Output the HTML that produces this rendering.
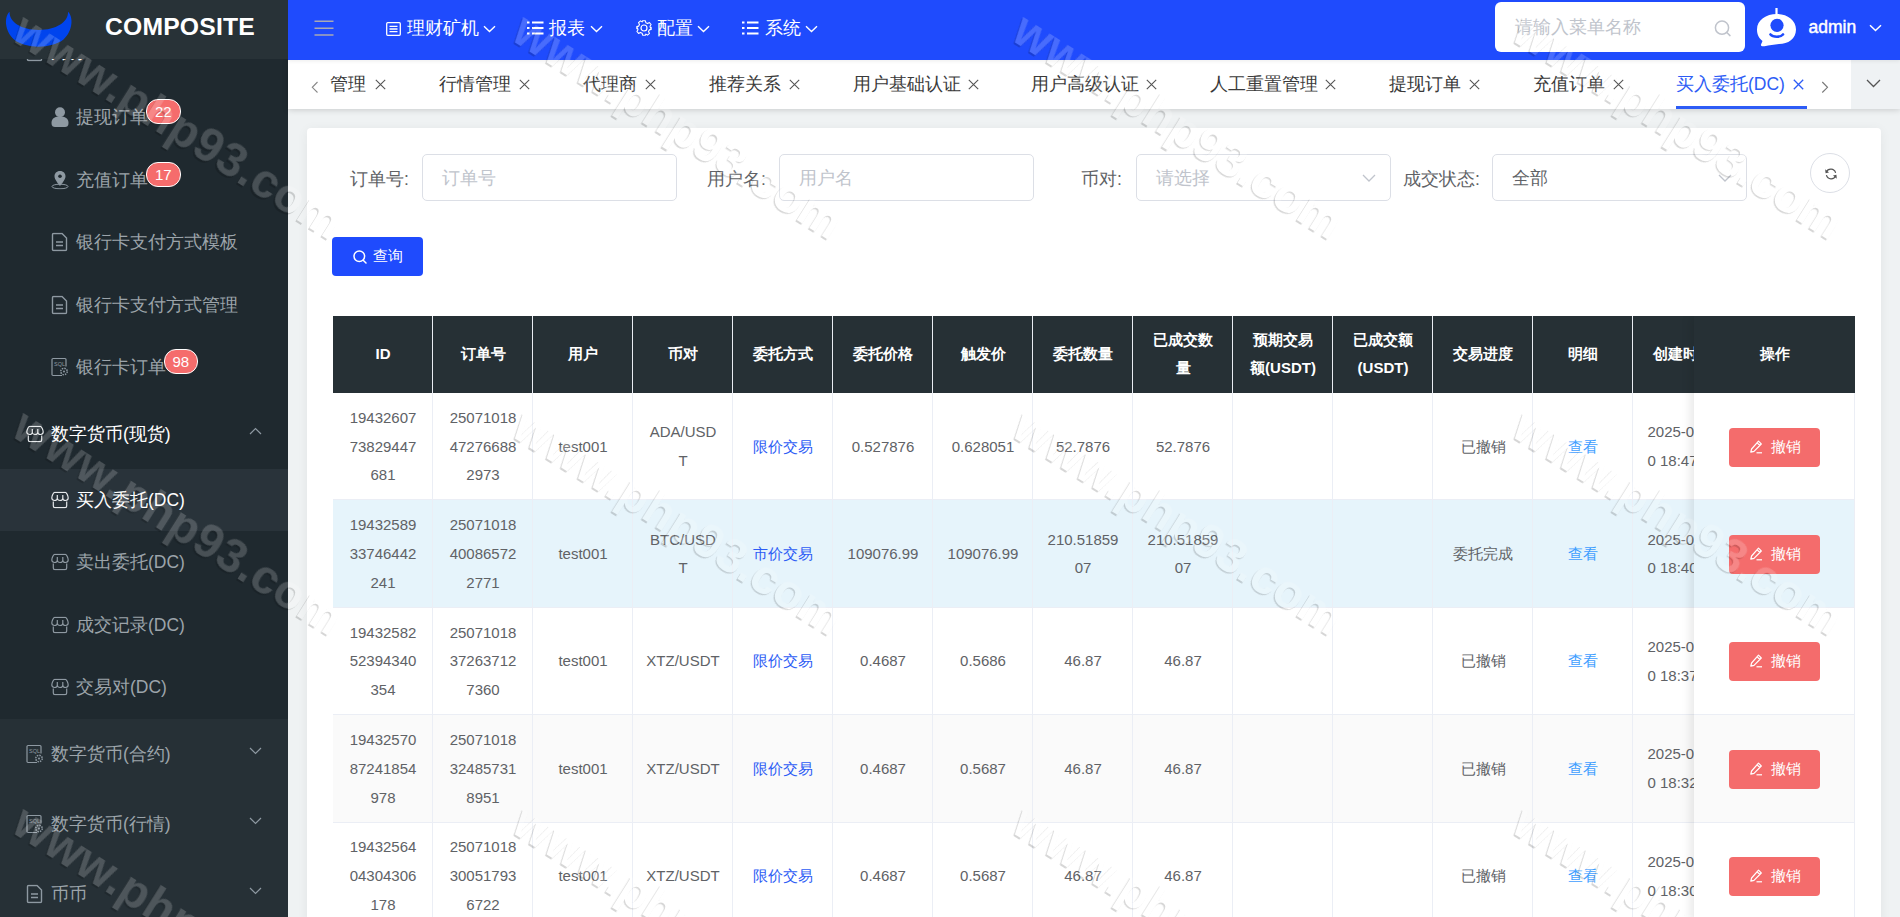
<!DOCTYPE html>
<html><head><meta charset="utf-8">
<style>
*{box-sizing:border-box;margin:0;padding:0}
html,body{width:1900px;height:917px;overflow:hidden;background:#eff2f3;font-family:"Liberation Sans",sans-serif;}
.abs{position:absolute}
#side{position:absolute;left:0;top:0;width:288px;height:917px;background:#1f292f;overflow:hidden}
#logo{position:absolute;left:0;top:0;width:288px;height:59px;background:#283237;z-index:3}
#logo .t{position:absolute;left:105px;top:13px;font-size:24.7px;font-weight:bold;color:#fff;letter-spacing:0.2px}
.mi{position:absolute;left:0;width:288px;color:#9ca4aa;font-size:17.5px;white-space:nowrap}
.mi .ic{position:absolute;top:50%;transform:translateY(-50%)}
.mi .tx{position:absolute;top:50%;transform:translateY(-50%)}
.badge{position:absolute;background:#f56c6c;color:#fff;font-size:15px;border:1px solid #fff;border-radius:12px;height:25px;line-height:23px;padding:0 8px;text-align:center}
#hdr{position:absolute;left:288px;top:0;width:1612px;height:60px;background:#1f4bfd;z-index:2;box-shadow:0 1px 4px rgba(0,0,0,.08)}
.hm{position:absolute;top:0;height:60px;line-height:56px;font-size:17.5px;color:#fff;font-weight:500;width:140px}
#tabs{position:absolute;left:288px;top:60px;width:1612px;height:49px;background:#fff;box-shadow:0 1px 6px rgba(0,0,0,.16)}
.tab{position:absolute;top:0;height:49px;line-height:49px;font-size:17.5px;color:#3a3a3a;white-space:nowrap}
#card{position:absolute;left:307px;top:128px;width:1574px;height:800px;background:#fff;border-radius:4px;box-shadow:0 2px 12px rgba(0,0,0,.06)}

.lbl{position:absolute;font-size:17.5px;color:#606266;line-height:20px;white-space:nowrap}
.inp{position:absolute;top:26px;width:254.5px;height:46.5px;border:1px solid #dcdfe6;border-radius:5px;background:#fff}
.inp .ph{position:absolute;left:19px;top:13px;font-size:17.5px;color:#c0c4cc;line-height:20px;white-space:nowrap}
.inp svg{position:absolute;right:14px;top:19px}
#tbl{position:absolute;left:25.5px;top:187.75px;width:1522.5px;height:700px;overflow:hidden}
.hrow{position:absolute;left:0;top:0;height:77.25px;width:1522.5px;background:#263035}
.hc{position:absolute;top:0;height:77.25px;width:100px;border-right:1px solid #e9ecf2;display:flex;align-items:center;justify-content:center;padding:0 0 0 2px;text-align:center;color:#fff;font-weight:bold;font-size:15px;line-height:28px}
.row{position:absolute;left:0;width:1522.5px;height:107.4px;border-bottom:1px solid #ebeef5}
.c{position:absolute;top:0;height:106.4px;width:100px;border-right:1px solid #ebeef5;display:flex;align-items:center;justify-content:center;text-align:center;color:#606266;font-size:15px;line-height:28.75px;word-break:break-all;padding:1.5px 11px 0 13px}
.c a{color:#2d5cf5;text-decoration:none}
.c .v{color:#409eff}
.fix{position:absolute;left:1361.5px;top:0;width:161px;height:700px;box-shadow:-3px 0 10px rgba(0,0,0,.10)}
.btn-del{position:absolute;left:35px;width:91px;height:39px;background:#f46c6c;border-radius:4px;color:#fff;font-size:15px;font-weight:500;line-height:38px}

</style></head>
<body>
<svg width="0" height="0" style="position:absolute"><defs>
<g id="shop"><path d="M3.5 0.8 H14.5 C15.6 0.8 17.2 5 17.2 6.6 C17.2 8 16 9 14.5 9 C13 9 11.8 8 11.8 6.8 C11.8 8 10.5 9 9 9 C7.5 9 6.3 8 6.3 6.8 C6.3 8 5 9 3.5 9 C2 9 0.8 8 0.8 6.6 C0.8 5 2.4 0.8 3.5 0.8 Z M6.3 3.6 V6.8 M11.8 3.6 V6.8 M2.3 10 V14.5 C2.3 15.5 3 16.2 4 16.2 H14 C15 16.2 15.7 15.5 15.7 14.5 V10" fill="none" stroke="#8e99a2" stroke-width="1.2"/></g>
<g id="sql"><path d="M11 18 L2 18 C1.5 18 1 17.5 1 17 L1 2 C1 1.5 1.5 1 2 1 L14 1 C14.5 1 15 1.5 15 2 L15 9" fill="none" stroke="#8e99a2" stroke-width="1.2"/><text x="3" y="8" font-size="5.5" fill="#8e99a2" font-family="Liberation Sans">SQL</text><circle cx="13" cy="14" r="3.2" fill="none" stroke="#8e99a2" stroke-width="1.5" stroke-dasharray="1.5 1"/><circle cx="13" cy="14" r="1" fill="#8e99a2"/></g>
<g id="doc"><path d="M2.5 1 L11 1 L15.5 5.5 L15.5 17 C15.5 17.6 15 18 14.5 18 L2.5 18 C2 18 1.5 17.6 1.5 17 L1.5 2 C1.5 1.4 2 1 2.5 1Z" fill="none" stroke="#8e99a2" stroke-width="1.4"/><path d="M5 9.5 H12 M5 13 H12" stroke="#8e99a2" stroke-width="1.4"/></g>
</defs></svg>
<div id="side">
  <div id="logo">
    <svg class="abs" style="left:0;top:0" width="80" height="59" viewBox="0 0 80 59">
      <path d="M9.6 11.8 C4 17 4.5 31 14 39.5 C25 49 52 49 63.5 39.5 C73 31 73.5 17 68 11.8 C68.5 22 56 30 38.8 30 C21.5 30 9 22 9.6 11.8 Z" fill="#0044ee"/>
    </svg>
    <div class="t">COMPOSITE</div>
  </div>
  <div id="menu">
    <div class="mi" style="top:17px;height:70px;color:#fff"><svg class="ic" style="left:26px" width="17" height="19" viewBox="0 0 17 19"><use href="#doc"/></svg><span class="tx" style="left:51px">财务</span></div>
    <div class="mi" style="top:86px;height:62.5px">
      <svg class="ic" style="left:51px" width="18" height="20" viewBox="0 0 18 20"><circle cx="9" cy="5.3" r="5" fill="#8e99a2"/><path d="M0.5 16 C0.5 11 4 9.5 9 9.5 C14 9.5 17.5 11 17.5 16 C17.5 19 16 20 14 20 L4 20 C2 20 0.5 19 0.5 16Z" fill="#8e99a2"/></svg>
      <span class="tx" style="left:76px">提现订单</span>
      <span class="badge" style="left:146px;top:13px">22</span>
    </div>
    <div class="mi" style="top:148.5px;height:62.5px">
      <svg class="ic" style="left:51px" width="18" height="19" viewBox="0 0 18 19"><path d="M9 0.5 C5.5 0.5 3.5 3 3.5 5.8 C3.5 9 7 13 9 15.5 C11 13 14.5 9 14.5 5.8 C14.5 3 12.5 0.5 9 0.5Z" fill="#8e99a2"/><circle cx="9" cy="5.8" r="1.8" fill="#1f292f"/><ellipse cx="9" cy="16" rx="8" ry="2.3" fill="none" stroke="#8e99a2" stroke-width="1"/></svg>
      <span class="tx" style="left:76px">充值订单</span>
      <span class="badge" style="left:146px;top:13.5px">17</span>
    </div>
    <div class="mi" style="top:211px;height:62.5px">
      <svg class="ic" style="left:51px" width="17" height="19" viewBox="0 0 17 19"><path d="M2.5 1 L11 1 L15.5 5.5 L15.5 17 C15.5 17.6 15 18 14.5 18 L2.5 18 C2 18 1.5 17.6 1.5 17 L1.5 2 C1.5 1.4 2 1 2.5 1Z" fill="none" stroke="#8e99a2" stroke-width="1.4"/><path d="M5 9.5 H12 M5 13 H12" stroke="#8e99a2" stroke-width="1.4"/></svg>
      <span class="tx" style="left:76px">银行卡支付方式模板</span>
    </div>
    <div class="mi" style="top:273.5px;height:62.5px">
      <svg class="ic" style="left:51px" width="17" height="19" viewBox="0 0 17 19"><path d="M2.5 1 L11 1 L15.5 5.5 L15.5 17 C15.5 17.6 15 18 14.5 18 L2.5 18 C2 18 1.5 17.6 1.5 17 L1.5 2 C1.5 1.4 2 1 2.5 1Z" fill="none" stroke="#8e99a2" stroke-width="1.4"/><path d="M5 9.5 H12 M5 13 H12" stroke="#8e99a2" stroke-width="1.4"/></svg>
      <span class="tx" style="left:76px">银行卡支付方式管理</span>
    </div>
    <div class="mi" style="top:336px;height:62.5px">
      <svg class="ic" style="left:51px" width="18" height="19" viewBox="0 0 18 19"><path d="M11 18 L2 18 C1.5 18 1 17.5 1 17 L1 2 C1 1.5 1.5 1 2 1 L14 1 C14.5 1 15 1.5 15 2 L15 9" fill="none" stroke="#8e99a2" stroke-width="1.2"/><text x="3" y="8" font-size="5.5" fill="#8e99a2" font-family="Liberation Sans">SQL</text><circle cx="13" cy="14" r="3.2" fill="none" stroke="#8e99a2" stroke-width="1.5" stroke-dasharray="1.5 1"/><circle cx="13" cy="14" r="1" fill="#8e99a2"/></svg>
      <span class="tx" style="left:76px">银行卡订单</span>
      <span class="badge" style="left:163.5px;top:12.8px">98</span>
    </div>
    <div class="mi open" style="top:398.5px;height:70px;color:#fff">
      <svg class="ic" style="left:26px" width="18" height="17" viewBox="0 0 18 17"><path d="M3.5 0.8 H14.5 C15.6 0.8 17.2 5 17.2 6.6 C17.2 8 16 9 14.5 9 C13 9 11.8 8 11.8 6.8 C11.8 8 10.5 9 9 9 C7.5 9 6.3 8 6.3 6.8 C6.3 8 5 9 3.5 9 C2 9 0.8 8 0.8 6.6 C0.8 5 2.4 0.8 3.5 0.8 Z M6.3 3.6 V6.8 M11.8 3.6 V6.8 M2.3 10 V14.5 C2.3 15.5 3 16.2 4 16.2 H14 C15 16.2 15.7 15.5 15.7 14.5 V10" fill="none" stroke="#e6e9eb" stroke-width="1.2"/></svg>
      <span class="tx" style="left:51px">数字货币(现货)</span>
      <svg class="ic" style="left:249px;margin-top:-2.5px" width="13" height="8" viewBox="0 0 13 8"><path d="M1 7 L6.5 1.5 L12 7" fill="none" stroke="#8e99a2" stroke-width="1.2"/></svg>
    </div>
    <div class="mi act" style="top:468.5px;height:62.5px;background:#29333a;color:#fff">
      <svg class="ic" style="left:51px" width="18" height="17" viewBox="0 0 18 17"><path d="M3.5 0.8 H14.5 C15.6 0.8 17.2 5 17.2 6.6 C17.2 8 16 9 14.5 9 C13 9 11.8 8 11.8 6.8 C11.8 8 10.5 9 9 9 C7.5 9 6.3 8 6.3 6.8 C6.3 8 5 9 3.5 9 C2 9 0.8 8 0.8 6.6 C0.8 5 2.4 0.8 3.5 0.8 Z M6.3 3.6 V6.8 M11.8 3.6 V6.8 M2.3 10 V14.5 C2.3 15.5 3 16.2 4 16.2 H14 C15 16.2 15.7 15.5 15.7 14.5 V10" fill="none" stroke="#e6e9eb" stroke-width="1.2"/></svg>
      <span class="tx" style="left:76px">买入委托(DC)</span>
    </div>
    <div class="mi" style="top:531px;height:62.5px">
      <svg class="ic" style="left:51px" width="18" height="17" viewBox="0 0 18 17"><use href="#shop"/></svg>
      <span class="tx" style="left:76px">卖出委托(DC)</span>
    </div>
    <div class="mi" style="top:593.5px;height:62.5px">
      <svg class="ic" style="left:51px" width="18" height="17" viewBox="0 0 18 17"><use href="#shop"/></svg>
      <span class="tx" style="left:76px">成交记录(DC)</span>
    </div>
    <div class="mi" style="top:656px;height:62.5px">
      <svg class="ic" style="left:51px" width="18" height="17" viewBox="0 0 18 17"><use href="#shop"/></svg>
      <span class="tx" style="left:76px">交易对(DC)</span>
    </div>
    <div class="mi top" style="top:718.5px;height:70px;background:#263036">
      <svg class="ic" style="left:26px" width="18" height="19" viewBox="0 0 18 19"><use href="#sql"/></svg>
      <span class="tx" style="left:51px">数字货币(合约)</span>
      <svg class="ic" style="left:249px;margin-top:-2.5px" width="13" height="8" viewBox="0 0 13 8"><path d="M1 1 L6.5 6.5 L12 1" fill="none" stroke="#8e99a2" stroke-width="1.2"/></svg>
    </div>
    <div class="mi top" style="top:788.5px;height:70px;background:#263036">
      <svg class="ic" style="left:26px" width="18" height="19" viewBox="0 0 18 19"><use href="#sql"/></svg>
      <span class="tx" style="left:51px">数字货币(行情)</span>
      <svg class="ic" style="left:249px;margin-top:-2.5px" width="13" height="8" viewBox="0 0 13 8"><path d="M1 1 L6.5 6.5 L12 1" fill="none" stroke="#8e99a2" stroke-width="1.2"/></svg>
    </div>
    <div class="mi top" style="top:858.5px;height:70px;background:#263036">
      <svg class="ic" style="left:26px" width="17" height="19" viewBox="0 0 17 19"><use href="#doc"/></svg>
      <span class="tx" style="left:51px">币币</span>
      <svg class="ic" style="left:249px;margin-top:-2.5px" width="13" height="8" viewBox="0 0 13 8"><path d="M1 1 L6.5 6.5 L12 1" fill="none" stroke="#8e99a2" stroke-width="1.2"/></svg>
    </div>
  </div>
</div>
<div id="hdr">
  <svg class="abs" style="left:26px;top:20px" width="20" height="16" viewBox="0 0 20 16"><path d="M0.5 1.3 H19.5 M0.5 8.2 H19.5 M0.5 15 H19.5" stroke="#a9a9b3" stroke-width="1.6"/></svg>
  <div class="hm" style="left:98px">
    <svg width="15" height="14" viewBox="0 0 15 14" style="position:absolute;left:0;top:22px"><rect x="0.7" y="0.7" width="13.6" height="12.6" rx="1" fill="none" stroke="#fff" stroke-width="1.3"/><path d="M3.5 4.3 H11.5 M3.5 7 H11.5 M3.5 9.7 H11.5" stroke="#fff" stroke-width="1.3"/></svg>
    <span style="position:absolute;left:21px;top:0">理财矿机</span>
    <svg width="13" height="8" viewBox="0 0 13 8" style="position:absolute;left:97px;top:25px"><path d="M1 1.2 L6.5 6.5 L12 1.2" fill="none" stroke="#fff" stroke-width="1.4"/></svg>
  </div>
  <div class="hm" style="left:239px">
    <svg width="17" height="14" viewBox="0 0 17 14" style="position:absolute;left:0;top:21px"><path d="M0 1.5 H2.5 M0 7 H2.5 M0 12.5 H2.5 M5 1.5 H16.5 M5 7 H16.5 M5 12.5 H16.5" stroke="#fff" stroke-width="2"/></svg>
    <span style="position:absolute;left:22px;top:0">报表</span>
    <svg width="13" height="8" viewBox="0 0 13 8" style="position:absolute;left:63px;top:25px"><path d="M1 1.2 L6.5 6.5 L12 1.2" fill="none" stroke="#fff" stroke-width="1.4"/></svg>
  </div>
  <div class="hm" style="left:348px">
    <svg width="16" height="16" viewBox="0 0 16 16" style="position:absolute;left:0;top:20px"><path d="M6.6 0.8 H9.4 L9.9 2.8 L11.6 3.6 L13.4 2.6 L15.1 4.5 L14 6.2 L14.5 8 L15.2 8.6 V7.4 L15.2 9.4 L13.3 9.9 L12.5 11.6 L13.5 13.4 L11.5 15.1 L9.9 14.1 L9.4 15.2 H6.6 L6.1 13.2 L4.4 12.4 L2.6 13.4 L0.9 11.5 L2 9.8 L1.5 8 L0.8 7.4 V8.6 L0.8 6.6 L2.7 6.1 L3.5 4.4 L2.5 2.6 L4.5 0.9 L6.1 1.9Z" fill="none" stroke="#fff" stroke-width="1.1" stroke-linejoin="round"/><circle cx="8" cy="8" r="3" fill="none" stroke="#fff" stroke-width="1.2"/></svg>
    <span style="position:absolute;left:21px;top:0">配置</span>
    <svg width="13" height="8" viewBox="0 0 13 8" style="position:absolute;left:61px;top:25px"><path d="M1 1.2 L6.5 6.5 L12 1.2" fill="none" stroke="#fff" stroke-width="1.4"/></svg>
  </div>
  <div class="hm" style="left:454px">
    <svg width="17" height="14" viewBox="0 0 17 14" style="position:absolute;left:0;top:21px"><path d="M0 1.5 H2.5 M0 7 H2.5 M0 12.5 H2.5 M5 1.5 H16.5 M5 7 H16.5 M5 12.5 H16.5" stroke="#fff" stroke-width="2"/></svg>
    <span style="position:absolute;left:23px;top:0">系统</span>
    <svg width="13" height="8" viewBox="0 0 13 8" style="position:absolute;left:63px;top:25px"><path d="M1 1.2 L6.5 6.5 L12 1.2" fill="none" stroke="#fff" stroke-width="1.4"/></svg>
  </div>
  <div class="abs" style="left:1207px;top:2px;width:250px;height:50px;background:#fff;border-radius:6px">
    <span class="abs" style="left:20px;top:13px;font-size:17.5px;color:#c0c4cc">请输入菜单名称</span>
    <svg class="abs" style="left:219px;top:18px" width="18" height="17" viewBox="0 0 18 17"><circle cx="8" cy="7.7" r="6.6" fill="none" stroke="#c0c4cc" stroke-width="1.5"/><path d="M12.8 12.5 L16 15.6" stroke="#c0c4cc" stroke-width="1.5" stroke-linecap="round"/></svg>
  </div>
  <svg class="abs" style="left:1469px;top:8px" width="40" height="40" viewBox="0 0 40 40"><path d="M19.5 0 V7" stroke="#fff" stroke-width="2.2"/><path d="M20 6 C30 6 39 12 39 21.5 C39 31 31 36 22 36 L11 37.5 C9 38 3 39.5 4 36.5 L5.5 33 C1.5 30 0 26 0 21.5 C0 12 9 6 20 6Z" fill="#fff"/><circle cx="20" cy="17.3" r="6.6" fill="#1f4bfd"/><path d="M13.5 26.5 C16 29.5 23.5 29.5 26 26.5" fill="none" stroke="#1f4bfd" stroke-width="2.6" stroke-linecap="round"/></svg>
  <span class="abs" style="left:1520.5px;top:17px;font-size:17.5px;color:#fff;-webkit-text-stroke:0.45px #fff">admin</span>
  <svg class="abs" style="left:1581px;top:24px" width="13" height="8" viewBox="0 0 13 8"><path d="M1 1.2 L6.5 6.5 L12 1.2" fill="none" stroke="#fff" stroke-width="1.5"/></svg>
</div>
<div id="tabs">
  <svg class="abs" style="left:22.5px;top:21px" width="8" height="12" viewBox="0 0 8 12"><path d="M6.5 1 L1.3 6.3 L6.5 11.5" fill="none" stroke="#888" stroke-width="1.1"/></svg>
  <div class="tab" style="left:42px"><span>管理</span><svg width="11" height="11" viewBox="0 0 11 11" style="position:absolute;top:19px;left:44.5px"><path d="M0.8 0.8 L10.2 10.2 M10.2 0.8 L0.8 10.2" stroke="#555" stroke-width="1.1"/></svg></div>
  <div class="tab" style="left:151px"><span>行情管理</span><svg width="11" height="11" viewBox="0 0 11 11" style="position:absolute;top:19px;left:79.5px"><path d="M0.8 0.8 L10.2 10.2 M10.2 0.8 L0.8 10.2" stroke="#555" stroke-width="1.1"/></svg></div>
  <div class="tab" style="left:295px"><span>代理商</span><svg width="11" height="11" viewBox="0 0 11 11" style="position:absolute;top:19px;left:62.0px"><path d="M0.8 0.8 L10.2 10.2 M10.2 0.8 L0.8 10.2" stroke="#555" stroke-width="1.1"/></svg></div>
  <div class="tab" style="left:421px"><span>推荐关系</span><svg width="11" height="11" viewBox="0 0 11 11" style="position:absolute;top:19px;left:79.5px"><path d="M0.8 0.8 L10.2 10.2 M10.2 0.8 L0.8 10.2" stroke="#555" stroke-width="1.1"/></svg></div>
  <div class="tab" style="left:565px"><span>用户基础认证</span><svg width="11" height="11" viewBox="0 0 11 11" style="position:absolute;top:19px;left:114.5px"><path d="M0.8 0.8 L10.2 10.2 M10.2 0.8 L0.8 10.2" stroke="#555" stroke-width="1.1"/></svg></div>
  <div class="tab" style="left:743px"><span>用户高级认证</span><svg width="11" height="11" viewBox="0 0 11 11" style="position:absolute;top:19px;left:114.5px"><path d="M0.8 0.8 L10.2 10.2 M10.2 0.8 L0.8 10.2" stroke="#555" stroke-width="1.1"/></svg></div>
  <div class="tab" style="left:922px"><span>人工重置管理</span><svg width="11" height="11" viewBox="0 0 11 11" style="position:absolute;top:19px;left:114.5px"><path d="M0.8 0.8 L10.2 10.2 M10.2 0.8 L0.8 10.2" stroke="#555" stroke-width="1.1"/></svg></div>
  <div class="tab" style="left:1101px"><span>提现订单</span><svg width="11" height="11" viewBox="0 0 11 11" style="position:absolute;top:19px;left:79.5px"><path d="M0.8 0.8 L10.2 10.2 M10.2 0.8 L0.8 10.2" stroke="#555" stroke-width="1.1"/></svg></div>
  <div class="tab" style="left:1245px"><span>充值订单</span><svg width="11" height="11" viewBox="0 0 11 11" style="position:absolute;top:19px;left:79.5px"><path d="M0.8 0.8 L10.2 10.2 M10.2 0.8 L0.8 10.2" stroke="#555" stroke-width="1.1"/></svg></div>
  <div class="tab" style="left:1388px;color:#2d5cf6"><span>买入委托(DC)</span><svg width="11" height="11" viewBox="0 0 11 11" style="position:absolute;top:19px;left:117px"><path d="M0.8 0.8 L10.2 10.2 M10.2 0.8 L0.8 10.2" stroke="#2d5cf6" stroke-width="1.3"/></svg></div>
  <div class="abs" style="left:1388px;top:46px;width:131px;height:3px;background:#2d5cf6"></div>
  <svg class="abs" style="left:1532.5px;top:21px" width="8" height="12" viewBox="0 0 8 12"><path d="M1.3 1 L6.5 6.3 L1.3 11.5" fill="none" stroke="#777" stroke-width="1.1"/></svg>
  <div class="abs" style="left:1563px;top:0;width:49px;height:49px;background:#eff2f4"><svg class="abs" style="left:15px;top:19px" width="15" height="9" viewBox="0 0 15 9"><path d="M1 1 L7.5 7.5 L14 1" fill="none" stroke="#555" stroke-width="1.3"/></svg></div>
</div>
<div id="card">
  <div class="lbl" style="left:43px;top:40.5px">订单号:</div>
  <div class="inp" style="left:115px"><span class="ph">订单号</span></div>
  <div class="lbl" style="left:400px;top:40.5px">用户名:</div>
  <div class="inp" style="left:472px"><span class="ph">用户名</span></div>
  <div class="lbl" style="left:774px;top:40.5px">币对:</div>
  <div class="inp" style="left:829px"><span class="ph">请选择</span><svg width="14" height="8" viewBox="0 0 14 8"><path d="M1 1 L7 7 L13 1" fill="none" stroke="#c0c4cc" stroke-width="1.3"/></svg></div>
  <div class="lbl" style="left:1096px;top:40.5px">成交状态:</div>
  <div class="inp" style="left:1185px"><span class="ph" style="color:#606266">全部</span><svg width="14" height="8" viewBox="0 0 14 8"><path d="M1 1 L7 7 L13 1" fill="none" stroke="#c0c4cc" stroke-width="1.3"/></svg></div>
  <div class="abs" style="left:1503px;top:25px;width:40px;height:40px;border:1px solid #dcdfe6;border-radius:50%;background:#fff">
    <svg class="abs" style="left:11.5px;top:11.5px" width="16" height="16" viewBox="0 0 16 16"><path d="M3.2 6.2 A5 5 0 0 1 12.6 6.8" fill="none" stroke="#555" stroke-width="1.2"/><path d="M12.8 9.8 A5 5 0 0 1 3.4 9.2" fill="none" stroke="#555" stroke-width="1.2"/><path d="M2.2 3.2 L2.6 7.2 L6 6.4Z" fill="#555"/><path d="M13.8 12.8 L13.4 8.8 L10 9.6Z" fill="#555"/></svg>
  </div>
  <div class="abs" style="left:25px;top:109px;width:91px;height:38.75px;background:#1f4bfd;border-radius:4px;color:#fff;font-size:15px;font-weight:500">
    <svg class="abs" style="left:21px;top:13px" width="14" height="14" viewBox="0 0 14 14"><circle cx="6.3" cy="6.3" r="5.3" fill="none" stroke="#fff" stroke-width="1.5"/><path d="M10.2 10.2 L13 13" stroke="#fff" stroke-width="1.5" stroke-linecap="round"/></svg>
    <span class="abs" style="left:41px;top:9px;line-height:20px">查询</span>
  </div>
  <div id="tbl">
<div class="hrow">
<div class="hc" style="left:0px">ID</div><div class="hc" style="left:100px">订单号</div><div class="hc" style="left:200px">用户</div><div class="hc" style="left:300px">币对</div><div class="hc" style="left:400px">委托方式</div><div class="hc" style="left:500px">委托价格</div><div class="hc" style="left:600px">触发价</div><div class="hc" style="left:700px">委托数量</div><div class="hc" style="left:800px">已成交数<br>量</div><div class="hc" style="left:900px">预期交易<br>额(USDT)</div><div class="hc" style="left:1000px">已成交额<br>(USDT)</div><div class="hc" style="left:1100px">交易进度</div><div class="hc" style="left:1200px">明细</div><div class="hc" style="left:1300px">创建时间</div>
</div>
<div class="row" style="top:77.25px;background:#fff"><div class="c" style="left:0px">19432607<br>73829447<br>681</div><div class="c" style="left:100px">25071018<br>47276688<br>2973</div><div class="c" style="left:200px">test001</div><div class="c" style="left:300px">ADA/USD<br>T</div><div class="c" style="left:400px"><a>限价交易</a></div><div class="c" style="left:500px">0.527876</div><div class="c" style="left:600px">0.628051</div><div class="c" style="left:700px">52.7876</div><div class="c" style="left:800px">52.7876</div><div class="c" style="left:900px"></div><div class="c" style="left:1000px"></div><div class="c" style="left:1100px">已撤销</div><div class="c" style="left:1200px"><span class="v">查看</span></div><div class="c" style="left:1300px;justify-content:flex-start;text-align:left;padding-left:15px;width:200px">2025-07-1<br>0 18:47</div></div>
<div class="row" style="top:184.65px;background:#e6f4fb"><div class="c" style="left:0px">19432589<br>33746442<br>241</div><div class="c" style="left:100px">25071018<br>40086572<br>2771</div><div class="c" style="left:200px">test001</div><div class="c" style="left:300px">BTC/USD<br>T</div><div class="c" style="left:400px"><a>市价交易</a></div><div class="c" style="left:500px">109076.99</div><div class="c" style="left:600px">109076.99</div><div class="c" style="left:700px">210.51859<br>07</div><div class="c" style="left:800px">210.51859<br>07</div><div class="c" style="left:900px"></div><div class="c" style="left:1000px"></div><div class="c" style="left:1100px">委托完成</div><div class="c" style="left:1200px"><span class="v">查看</span></div><div class="c" style="left:1300px;justify-content:flex-start;text-align:left;padding-left:15px;width:200px">2025-07-1<br>0 18:40</div></div>
<div class="row" style="top:292.05px;background:#fff"><div class="c" style="left:0px">19432582<br>52394340<br>354</div><div class="c" style="left:100px">25071018<br>37263712<br>7360</div><div class="c" style="left:200px">test001</div><div class="c" style="left:300px">XTZ/USDT</div><div class="c" style="left:400px"><a>限价交易</a></div><div class="c" style="left:500px">0.4687</div><div class="c" style="left:600px">0.5686</div><div class="c" style="left:700px">46.87</div><div class="c" style="left:800px">46.87</div><div class="c" style="left:900px"></div><div class="c" style="left:1000px"></div><div class="c" style="left:1100px">已撤销</div><div class="c" style="left:1200px"><span class="v">查看</span></div><div class="c" style="left:1300px;justify-content:flex-start;text-align:left;padding-left:15px;width:200px">2025-07-1<br>0 18:37</div></div>
<div class="row" style="top:399.45px;background:#fafafa"><div class="c" style="left:0px">19432570<br>87241854<br>978</div><div class="c" style="left:100px">25071018<br>32485731<br>8951</div><div class="c" style="left:200px">test001</div><div class="c" style="left:300px">XTZ/USDT</div><div class="c" style="left:400px"><a>限价交易</a></div><div class="c" style="left:500px">0.4687</div><div class="c" style="left:600px">0.5687</div><div class="c" style="left:700px">46.87</div><div class="c" style="left:800px">46.87</div><div class="c" style="left:900px"></div><div class="c" style="left:1000px"></div><div class="c" style="left:1100px">已撤销</div><div class="c" style="left:1200px"><span class="v">查看</span></div><div class="c" style="left:1300px;justify-content:flex-start;text-align:left;padding-left:15px;width:200px">2025-07-1<br>0 18:32</div></div>
<div class="row" style="top:506.85px;background:#fff"><div class="c" style="left:0px">19432564<br>04304306<br>178</div><div class="c" style="left:100px">25071018<br>30051793<br>6722</div><div class="c" style="left:200px">test001</div><div class="c" style="left:300px">XTZ/USDT</div><div class="c" style="left:400px"><a>限价交易</a></div><div class="c" style="left:500px">0.4687</div><div class="c" style="left:600px">0.5687</div><div class="c" style="left:700px">46.87</div><div class="c" style="left:800px">46.87</div><div class="c" style="left:900px"></div><div class="c" style="left:1000px"></div><div class="c" style="left:1100px">已撤销</div><div class="c" style="left:1200px"><span class="v">查看</span></div><div class="c" style="left:1300px;justify-content:flex-start;text-align:left;padding-left:15px;width:200px">2025-07-1<br>0 18:30</div></div>
<div class="fix">
<div class="abs" style="left:0;top:0;width:161px;height:77.25px;background:#263035;color:#fff;font-weight:bold;font-size:15px;text-align:center;line-height:75px">操作</div>
<div class="abs" style="left:0;top:77.25px;width:161px;height:107.4px;background:#fff;border-bottom:1px solid #ebeef5;border-right:1px solid #ebeef5"><div class="btn-del" style="top:34.5px"><svg class="abs" style="left:20px;top:12px" width="14" height="14" viewBox="0 0 14 14"><path d="M9.5 1.2 L12.3 4 L5 11.3 L1.8 12.2 L2.6 9 Z M8 2.7 L10.8 5.5" fill="none" stroke="#fff" stroke-width="1.2" stroke-linejoin="round"/><path d="M7.5 12.8 H13" stroke="#fff" stroke-width="1.2"/></svg><span class="abs" style="left:42px;top:0">撤销</span></div></div>
<div class="abs" style="left:0;top:184.65px;width:161px;height:107.4px;background:#e6f4fb;border-bottom:1px solid #ebeef5;border-right:1px solid #ebeef5"><div class="btn-del" style="top:34.5px"><svg class="abs" style="left:20px;top:12px" width="14" height="14" viewBox="0 0 14 14"><path d="M9.5 1.2 L12.3 4 L5 11.3 L1.8 12.2 L2.6 9 Z M8 2.7 L10.8 5.5" fill="none" stroke="#fff" stroke-width="1.2" stroke-linejoin="round"/><path d="M7.5 12.8 H13" stroke="#fff" stroke-width="1.2"/></svg><span class="abs" style="left:42px;top:0">撤销</span></div></div>
<div class="abs" style="left:0;top:292.05px;width:161px;height:107.4px;background:#fff;border-bottom:1px solid #ebeef5;border-right:1px solid #ebeef5"><div class="btn-del" style="top:34.5px"><svg class="abs" style="left:20px;top:12px" width="14" height="14" viewBox="0 0 14 14"><path d="M9.5 1.2 L12.3 4 L5 11.3 L1.8 12.2 L2.6 9 Z M8 2.7 L10.8 5.5" fill="none" stroke="#fff" stroke-width="1.2" stroke-linejoin="round"/><path d="M7.5 12.8 H13" stroke="#fff" stroke-width="1.2"/></svg><span class="abs" style="left:42px;top:0">撤销</span></div></div>
<div class="abs" style="left:0;top:399.45px;width:161px;height:107.4px;background:#fafafa;border-bottom:1px solid #ebeef5;border-right:1px solid #ebeef5"><div class="btn-del" style="top:34.5px"><svg class="abs" style="left:20px;top:12px" width="14" height="14" viewBox="0 0 14 14"><path d="M9.5 1.2 L12.3 4 L5 11.3 L1.8 12.2 L2.6 9 Z M8 2.7 L10.8 5.5" fill="none" stroke="#fff" stroke-width="1.2" stroke-linejoin="round"/><path d="M7.5 12.8 H13" stroke="#fff" stroke-width="1.2"/></svg><span class="abs" style="left:42px;top:0">撤销</span></div></div>
<div class="abs" style="left:0;top:506.85px;width:161px;height:107.4px;background:#fff;border-bottom:1px solid #ebeef5;border-right:1px solid #ebeef5"><div class="btn-del" style="top:34.5px"><svg class="abs" style="left:20px;top:12px" width="14" height="14" viewBox="0 0 14 14"><path d="M9.5 1.2 L12.3 4 L5 11.3 L1.8 12.2 L2.6 9 Z M8 2.7 L10.8 5.5" fill="none" stroke="#fff" stroke-width="1.2" stroke-linejoin="round"/><path d="M7.5 12.8 H13" stroke="#fff" stroke-width="1.2"/></svg><span class="abs" style="left:42px;top:0">撤销</span></div></div>
</div>
</div>
</div>
<svg id="wm" width="1900" height="917" viewBox="0 0 1900 917" style="position:absolute;left:0;top:0;z-index:50;pointer-events:none">
<defs><g id="wmt" font-family="Liberation Sans" font-weight="bold" font-size="47.6"><text x="9.5" y="39" transform="rotate(32.2 9.5 39)" letter-spacing="0.4">www.php93.com</text><text x="509.5" y="39" transform="rotate(32.2 509.5 39)" letter-spacing="0.4">www.php93.com</text><text x="1009.5" y="39" transform="rotate(32.2 1009.5 39)" letter-spacing="0.4">www.php93.com</text><text x="1509.5" y="39" transform="rotate(32.2 1509.5 39)" letter-spacing="0.4">www.php93.com</text><text x="9.5" y="435" transform="rotate(32.2 9.5 435)" letter-spacing="0.4">www.php93.com</text><text x="509.5" y="435" transform="rotate(32.2 509.5 435)" letter-spacing="0.4">www.php93.com</text><text x="1009.5" y="435" transform="rotate(32.2 1009.5 435)" letter-spacing="0.4">www.php93.com</text><text x="1509.5" y="435" transform="rotate(32.2 1509.5 435)" letter-spacing="0.4">www.php93.com</text><text x="9.5" y="831" transform="rotate(32.2 9.5 831)" letter-spacing="0.4">www.php93.com</text><text x="509.5" y="831" transform="rotate(32.2 509.5 831)" letter-spacing="0.4">www.php93.com</text><text x="1009.5" y="831" transform="rotate(32.2 1009.5 831)" letter-spacing="0.4">www.php93.com</text><text x="1509.5" y="831" transform="rotate(32.2 1509.5 831)" letter-spacing="0.4">www.php93.com</text></g>
<filter id="bl" x="0" y="0" width="1900" height="917" filterUnits="userSpaceOnUse"><feGaussianBlur stdDeviation="0.7"/></filter>
<mask id="ko" maskUnits="userSpaceOnUse" x="0" y="0" width="1900" height="917"><rect width="1900" height="917" fill="#fff"/><use href="#wmt" fill="#000"/></mask></defs>
<g mask="url(#ko)"><g filter="url(#bl)"><use href="#wmt" transform="translate(-1.5,1.5)" fill="rgba(0,0,0,0.16)"/></g></g>
<use href="#wmt" fill="rgba(255,255,255,0.18)"/>
</svg>
</body></html>
